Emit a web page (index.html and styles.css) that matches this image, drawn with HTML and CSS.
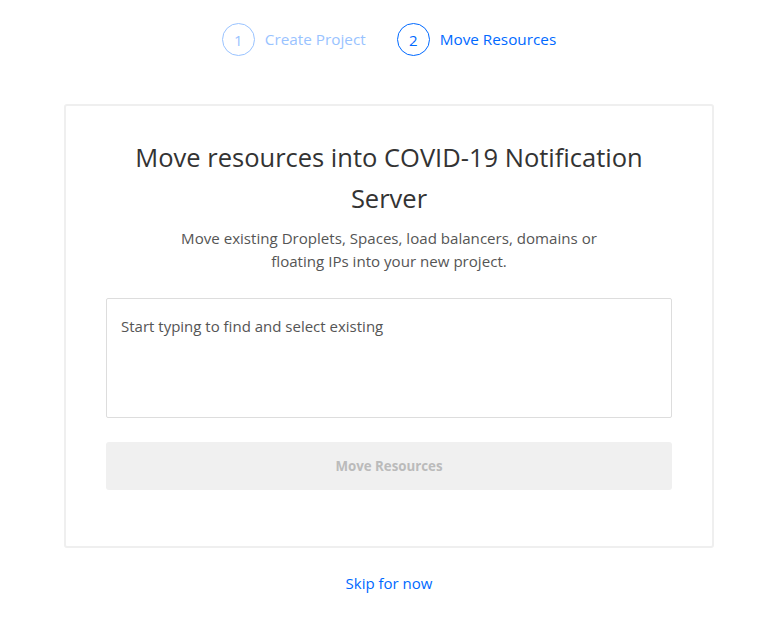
FILE: index.html
```html
<!DOCTYPE html>
<html>
<head>
<meta charset="utf-8">
<link rel="stylesheet" href="styles.css">
</head>
<body>
<div class="stepper">
  <div class="step done"><span class="num">1</span><span class="label">Create Project</span></div>
  <div class="step active"><span class="num">2</span><span class="label">Move Resources</span></div>
</div>
<div class="card">
  <h1 class="title">Move resources into COVID-19 Notification Server</h1>
  <p class="sub">Move existing Droplets, Spaces, load balancers, domains or<br>floating IPs into your new project.</p>
  <div class="input">Start typing to find and select existing</div>
  <div class="btn">Move Resources</div>
</div>
<div class="skip"><a href="#">Skip for now</a></div>
</body>
</html>
```
FILE: styles.css
```css
html, body { margin: 0; padding: 0; background: #fff; }
body { font-family: "Open Sans", sans-serif; color: #333; }
.stepper { display: flex; justify-content: center; align-items: center; gap: 31px; padding-top: 23px; height: 33px; }
.step { display: flex; align-items: center; gap: 10px; font-size: 15.3px; line-height: 20px; }
.label { position: relative; top: -1px; }
.num { width: 31px; height: 31px; border-radius: 50%; border: 1px solid; display: flex; align-items: center; justify-content: center; font-size: 15px; }
.done { color: #99c3ff; }
.done .num { border-color: #99c3ff; }
.active { color: #0069ff; }
.active .num { border-color: #0069ff; }
.card { width: 650px; margin: 48px auto 0; border: 2px solid #efefef; border-radius: 3px; padding: 31px 40px 56px; box-sizing: border-box; text-align: center; }
.title { margin: 0 auto; font-weight: 400; font-size: 25.5px; line-height: 41px; color: #333; max-width: 540px; }
.sub { margin: 8px 0 0; font-size: 15.1px; line-height: 23px; color: #555; }
.input { margin-top: 25px; height: 120px; box-sizing: border-box; border: 1px solid #ddd; border-radius: 2px; text-align: left; padding: 17px 14px; font-size: 15px; color: #555; line-height: 20px; }
.btn { margin-top: 24px; height: 48px; background: #f0f0f0; border-radius: 3px; display: flex; align-items: center; justify-content: center; font-size: 13.3px; font-weight: 700; color: #bbb; }
.skip { text-align: center; margin-top: 25px; font-size: 15px; }
.skip a { color: #0069ff; text-decoration: none; }
```
